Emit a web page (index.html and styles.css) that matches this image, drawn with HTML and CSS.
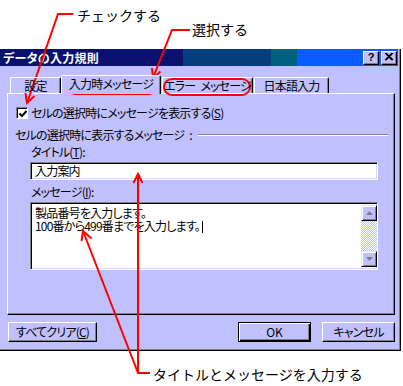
FILE: index.html
```html
<!DOCTYPE html>
<html lang="ja">
<head>
<meta charset="utf-8">
<title>データの入力規則</title>
<link rel="stylesheet" href="styles.css">
</head>
<body>
<div class="stage">
  <div class="top-gap"></div>
  <div class="dialog">
    <div class="titlebar">
      <span class="title">データの入力規則</span>
      <div class="tb-btns">
        <span class="tb-btn">?</span>
        <span class="tb-btn"><svg width="9" height="8" viewBox="0 0 9 8"><path d="M1 0 L8 7 M8 0 L1 7 M0 0 L7 7 M7 0 L0 7" stroke="#000" stroke-width="1.2" fill="none"/></svg></span>
      </div>
    </div>
    <div class="dlg-body">
      <div class="tabs">
        <div class="tab t1">設定</div>
        <div class="tab active t2">入力時メッセージ</div>
        <div class="tab t3">エラー<span class="sp"></span>メッセージ</div>
        <div class="tab t4">日本語入力</div>
      </div>
      <div class="panel">
        <div class="chk-row">
          <span class="chk"><svg width="8" height="8" viewBox="0 0 8 8"><polyline points="0.5,3.5 3,6 7.5,1" stroke="#000" stroke-width="2" fill="none"/></svg></span>
          <span class="chk-label">セルの選択時にメッセージを表示する(<u>S</u>)</span>
        </div>
        <div class="group">
          <span class="group-label">セルの選択時に表示するメッセージ<span class="sp"></span>:</span>
          <span class="etch"></span>
        </div>
        <div class="lbl">タイトル(<u>T</u>):</div>
        <div class="field input">入力案内</div>
        <div class="lbl lbl-msg">メッセージ(<u>I</u>):</div>
        <div class="field textarea">
          <div class="ta-text"><div class="ta-line">製品番号を入力します。</div><div class="ta-line">100番から499番までを入力します。<span class="caret"></span></div></div>
          <div class="scroll">
            <div class="sb-btn"><svg width="7" height="4" viewBox="0 0 7 4"><polygon points="3.5,0 7,4 0,4" fill="#808080"/></svg></div>
            <div class="sb-track"></div>
            <div class="sb-btn"><svg width="7" height="4" viewBox="0 0 7 4"><polygon points="0,0 7,0 3.5,4" fill="#808080"/></svg></div>
          </div>
        </div>
      </div>
      <div class="btn-row">
        <div class="btn btn-clear">すべてクリア(<u>C</u>)</div>
        <div class="spacer"></div>
        <div class="btn btn-default">OK</div>
        <div class="btn">キャンセル</div>
      </div>
    </div>
  </div>

  <span class="note note-check">チェックする</span>
  <span class="note note-select">選択する</span>
  <span class="note note-input">タイトルとメッセージを入力する</span>

  <svg class="marks" width="403" height="386" viewBox="0 0 403 386">
    <g stroke="#ff0000" stroke-width="2" fill="none" stroke-linejoin="miter">
      <polyline points="73,14 58,14 27,103"/>
      <polyline points="25.5,93 27,103 34.5,96"/>
      <polyline points="190,30 172,30 153,78"/>
      <polyline points="152,68 153,78 160.5,71.5"/>
      <rect x="67" y="77" width="90" height="17" rx="8" ry="8"/>
      <rect x="164" y="79" width="86" height="16" rx="8" ry="8"/>
      <polyline points="150,373 138,373 138,174"/>
      <polyline points="133.5,183 138,174 142.5,183"/>
      <line x1="138" y1="373" x2="83" y2="231"/>
      <polyline points="81.5,241 83,231 91.5,238.5"/>
    </g>
  </svg>
</div>
</body>
</html>
```

FILE: styles.css
```css
* { box-sizing: border-box; }

html, body {
  margin: 0;
  padding: 0;
  background: #ffffff;
}

body {
  font-family: "Noto Sans CJK JP", "Liberation Sans", sans-serif;
  font-size: 12px;
  color: #000;
}

.stage {
  position: relative;
  width: 403px;
  height: 386px;
  overflow: hidden;
}

.top-gap { height: 49px; }

.dialog {
  width: 401px;
  height: 302px;
  background: #c0c0ff;
  border-right: 1px solid #000;
  border-bottom: 1px solid #000;
  box-shadow: inset -1px -1px 0 #808080;
}

.titlebar {
  height: 17px;
  margin-right: 2px;
  display: flex;
  align-items: center;
  justify-content: space-between;
  background: linear-gradient(to right,
    #0a126e 0, #0a126e 183px,
    #043e7c 183px, #043e7c 271px,
    #006080 271px, #006080 297px,
    #0a5cff 297px, #0a5cff 100%);
  padding: 0 1px 0 3px;
}

.title {
  color: #fff;
  font-weight: bold;
  font-size: 12px;
  line-height: 17px;
  font-feature-settings: "palt";
  letter-spacing: 0.3px;
}

.tb-btns {
  display: flex;
  gap: 2px;
}

.tb-btn {
  width: 16px;
  height: 14px;
  background: #c0c0ff;
  border-top: 1px solid #fff;
  border-left: 1px solid #fff;
  border-right: 1px solid #000;
  border-bottom: 1px solid #000;
  box-shadow: inset -1px -1px 0 #808080;
  display: flex;
  align-items: center;
  justify-content: center;
  font-family: "Liberation Sans", sans-serif;
  font-weight: bold;
  font-size: 11px;
  line-height: 12px;
  padding-bottom: 1px;
}

.dlg-body {
  padding: 0 0 0 7px;
}

.tabs {
  display: flex;
  align-items: flex-end;
  height: 18px;
  margin: 9px 0 0 3px;
  position: relative;
  z-index: 1;
}

.tab {
  height: 16px;
  border-top: 1px solid #fff;
  border-left: 1px solid #fff;
  border-right: 1px solid #000;
  border-top-left-radius: 2px;
  border-top-right-radius: 2px;
  box-shadow: inset -1px 0 0 #808080;
  display: flex;
  align-items: center;
  justify-content: center;
  line-height: 14px;
  font-feature-settings: "palt";
  letter-spacing: -0.8px;
  white-space: nowrap;
  padding-top: 1px;
}

.sp {
  display: inline-block;
  width: 5px;
}

.t1 { width: 51px; }
.t2 { width: 100px; }
.t3 { width: 91px; margin-left: 1px; }
.t4 { width: 75px; margin-left: 1px; }

.tab.active {
  height: 19px;
  margin-bottom: -1px;
  background: #c0c0ff;
  padding-top: 0;
  padding-bottom: 2px;
}

.panel {
  width: 388px;
  height: 222px;
  border-top: 1px solid #fff;
  border-left: 1px solid #fff;
  border-right: 1px solid #000;
  border-bottom: 1px solid #000;
  box-shadow: inset -1px -1px 0 #808080;
  display: flex;
  flex-direction: column;
  font-feature-settings: "palt";
  letter-spacing: -0.8px;
}

.chk-row {
  display: flex;
  align-items: center;
  margin: 13px 0 0 8px;
  height: 12px;
  gap: 3px;
}

.chk {
  width: 12px;
  height: 12px;
  background: #fff;
  border-top: 1px solid #808080;
  border-left: 1px solid #808080;
  border-right: 1px solid #fff;
  border-bottom: 1px solid #fff;
  box-shadow: inset 1px 1px 0 #000;
  display: flex;
  align-items: center;
  justify-content: center;
  padding: 1px 0 0 1px;
}

.chk svg { display: block; }

.chk-label { line-height: 12px; }

.group {
  display: flex;
  align-items: center;
  height: 14px;
  margin: 8px 6px 0 7px;
  gap: 6px;
}

.etch {
  flex: 1;
  height: 2px;
  border-top: 1px solid #808080;
  border-bottom: 1px solid #fff;
  margin-top: 2px;
}

.lbl {
  height: 13px;
  line-height: 13px;
  margin: 4px 0 0 23px;
}

.lbl-msg { margin-top: 5px; }

.field {
  width: 348px;
  margin-left: 22px;
  background: #fff;
  border-top: 1px solid #808080;
  border-left: 1px solid #808080;
  border-right: 1px solid #fff;
  border-bottom: 1px solid #fff;
  box-shadow: inset 1px 1px 0 #000, inset -1px -1px 0 #d8d8ff;
}

.input {
  height: 18px;
  margin-top: 4px;
  line-height: 16px;
  padding-left: 4px;
}

.textarea {
  height: 68px;
  margin-top: 4px;
  display: flex;
  padding: 2px 0 2px 2px;
}

.ta-text {
  flex: 1;
  padding: 1px 0 0 2px;
}

.ta-line {
  height: 13px;
  line-height: 13px;
  white-space: nowrap;
}

.caret {
  display: inline-block;
  width: 1px;
  height: 12px;
  background: #000;
  vertical-align: -2px;
  margin-left: 2px;
}

.scroll {
  width: 16px;
  display: flex;
  flex-direction: column;
}

.sb-btn {
  height: 16px;
  background: #c0c0ff;
  border-top: 1px solid #e0e0ff;
  border-left: 1px solid #e0e0ff;
  border-right: 1px solid #000;
  border-bottom: 1px solid #000;
  box-shadow: inset 1px 1px 0 #fff, inset -1px -1px 0 #808080;
  display: flex;
  align-items: center;
  justify-content: center;
}

.sb-btn svg { display: block; }

.sb-track {
  flex: 1;
  background-color: #fff;
  background-image: repeating-conic-gradient(#c0c0ff 0 25%, #ffffff 0 50%);
  background-size: 2px 2px;
}

.btn-row {
  display: flex;
  width: 387px;
  margin: 7px 0 0 1px;
  gap: 11px;
}

.spacer { flex: 1; }

.btn {
  width: 73px;
  height: 20px;
  border-top: 1px solid #fff;
  border-left: 1px solid #fff;
  border-right: 1px solid #000;
  border-bottom: 1px solid #000;
  box-shadow: inset -1px -1px 0 #808080;
  display: flex;
  align-items: center;
  justify-content: center;
  font-feature-settings: "palt";
  letter-spacing: -0.8px;
  line-height: 14px;
  white-space: nowrap;
}

.btn-clear { width: 89px; }

.btn-default {
  border: 1px solid #000;
  box-shadow: inset 1px 1px 0 #fff, inset -1px -1px 0 #000, inset -2px -2px 0 #808080;
  letter-spacing: 0;
}

.note {
  position: absolute;
  font-size: 14px;
  line-height: 16px;
  white-space: nowrap;
  color: #000;
}

.note-check { left: 77px; top: 7px; }
.note-select { left: 192px; top: 21px; }
.note-input { left: 153px; top: 366px; }

.marks {
  position: absolute;
  left: 0;
  top: 0;
  pointer-events: none;
}
```
